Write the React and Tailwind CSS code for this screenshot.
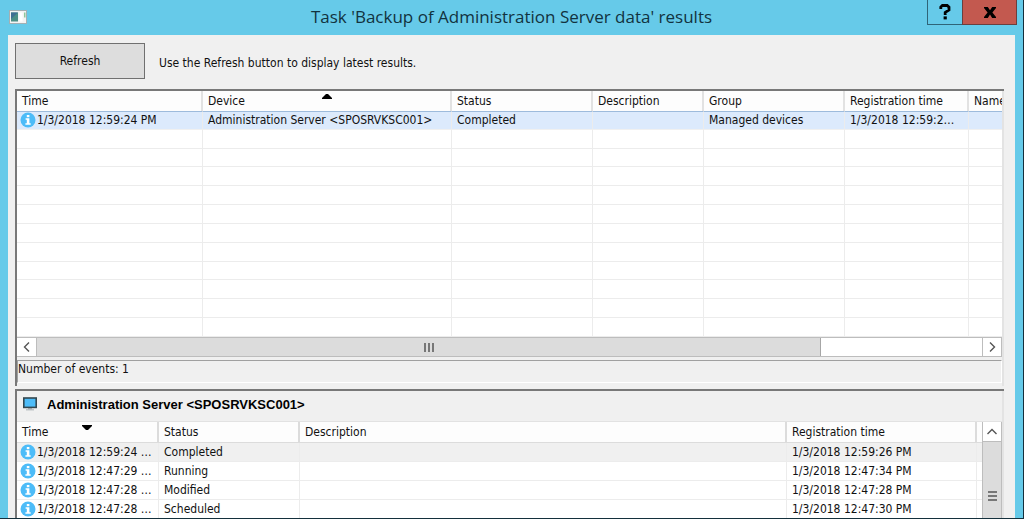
import { useState } from "react";

const events = [
  {
    time: "1/3/2018 12:59:24 PM",
    device: "Administration Server <SPOSRVKSC001>",
    status: "Completed",
    description: "",
    group: "Managed devices",
    registered: "1/3/2018 12:59:26 PM",
  },
];

const history = [
  { time: "1/3/2018 12:59:24 PM", status: "Completed", registered: "1/3/2018 12:59:26 PM" },
  { time: "1/3/2018 12:47:29 PM", status: "Running", registered: "1/3/2018 12:47:34 PM" },
  { time: "1/3/2018 12:47:28 PM", status: "Modified", registered: "1/3/2018 12:47:28 PM" },
  { time: "1/3/2018 12:47:28 PM", status: "Scheduled", registered: "1/3/2018 12:47:30 PM" },
];

const EMPTY_ROWS = 11;

const th = "relative border-r-2 border-[#e2e2e2] p-0 pl-[5px] text-left font-normal whitespace-nowrap overflow-hidden";
const td = "border-r border-[#ececec] p-0 pl-[5px] whitespace-nowrap overflow-hidden";

function InfoIcon() {
  return (
    <svg viewBox="0 0 16 16" className="size-4 shrink-0" aria-hidden="true">
      <circle cx="8" cy="8" r="7.5" fill="#4dbcf8" />
      <rect x="6.8" y="3" width="2.6" height="2.2" fill="#fff" />
      <path d="M5.6 6.3h3.8v4.9h1.3v1.5H5.4v-1.5h1.4V7.8H5.6z" fill="#fff" />
    </svg>
  );
}

function SortArrow({ down }) {
  return (
    <svg viewBox="0 0 10 5" className="absolute top-[3px] left-1/2 h-[5px] w-[10px] -translate-x-1/2" aria-hidden="true">
      <path d={down ? "M0 0h10v1L6 5H4L0 1z" : "M0 5h10V4L6 0H4L0 4z"} fill="#000" />
    </svg>
  );
}

function Chevron({ d }) {
  return (
    <svg viewBox="0 0 10 10" className="size-[10px]" aria-hidden="true">
      <path d={d} fill="none" stroke="#555" strokeWidth="1.4" />
    </svg>
  );
}

function TimeCell({ time }) {
  return (
    <div className="flex items-center gap-px pr-1">
      <InfoIcon />
      <span className="truncate">{time}</span>
    </div>
  );
}

export default function App() {
  const [selected, setSelected] = useState(0);

  return (
    <div className="flex h-screen flex-col overflow-hidden border-r border-b border-[#14303c] bg-[#66cae9] font-['DejaVu_Sans_Condensed','DejaVu_Sans',sans-serif] text-[12px] leading-4 text-[#111]">
      {/* Title bar */}
      <header className="grid h-[35px] shrink-0 grid-cols-[96px_1fr_96px]">
        <div className="pt-[10px] pl-[9px]">
          <svg viewBox="0 0 18 14" className="h-[14px] w-[18px]" aria-hidden="true">
            <rect x="0.5" y="0.5" width="17" height="13" fill="#f4f4f4" stroke="#a3b0b4" />
            <rect x="2" y="2.5" width="7" height="9" fill="#4c8f86" />
            <path d="M2 2.5h7L2 9z" fill="#3f6f93" />
            <rect x="10.5" y="2.5" width="3" height="9" fill="#fff" />
            <rect x="15" y="2.5" width="1.5" height="5" fill="#8fc79b" />
          </svg>
        </div>
        <h1 className="truncate pt-[5px] text-center font-['Open_Sans',sans-serif] text-[17px] leading-6 text-[#12333f]">
          Task 'Backup of Administration Server data' results
        </h1>
        <div className="flex h-[25px] w-[90px]">
          <button aria-label="Help" className="flex w-9 items-center justify-center border border-t-0 border-[#2f6478] text-black">
            <svg viewBox="0 0 12 16" className="h-4 w-3" aria-hidden="true">
              <path d="M1.8 5V3L3.4 1.5h4.8L10 3.2v2.7L6.2 8.4v2.6" fill="none" stroke="#000" strokeWidth="2.8" />
              <rect x="4.6" y="12.4" width="3.2" height="3" fill="#000" />
            </svg>
          </button>
          <button aria-label="Close" className="-ml-px flex flex-1 items-center justify-center border border-t-0 border-[#6b3f3e] bg-[#c3594f]">
            <svg viewBox="0 0 12 11" className="h-[11px] w-3" aria-hidden="true">
              <path d="M0 0h3.8L6 3.3 8.2 0H12v1L8.4 5.5 12 10v1H8.2L6 7.6 3.8 11H0v-1l3.6-4.5L0 1z" fill="#000" />
            </svg>
          </button>
        </div>
      </header>

      <main className="mr-2 ml-2 flex min-h-0 flex-1 flex-col bg-[#f0f0f0] pr-[11px] pl-[7px]">
        <div className="flex items-center gap-[14px] pt-2 pb-[10px]">
          <button className="h-9 w-[130px] border border-[#707070] bg-[#dddddd]">Refresh</button>
          <p className="pt-1">Use the Refresh button to display latest results.</p>
        </div>

        {/* Events list */}
        <section className="shrink-0 border-t-2 border-l-2 border-[#787878]">
          <div className="border-r-2 border-[#e3e3e3] bg-white">
            <table className="h-[246px] w-full table-fixed border-separate border-spacing-0">
              <colgroup>
                <col className="w-[186px]" />
                <col className="w-[249px]" />
                <col className="w-[141px]" />
                <col className="w-[111px]" />
                <col className="w-[141px]" />
                <col className="w-[124px]" />
                <col />
              </colgroup>
              <thead>
                <tr className="h-5 bg-[#fdfdfd]">
                  <th className={th}>Time</th>
                  <th className={th}>
                    Device
                    <SortArrow />
                  </th>
                  <th className={th}>Status</th>
                  <th className={th}>Description</th>
                  <th className={th}>Group</th>
                  <th className={th}>Registration time</th>
                  <th className="overflow-hidden p-0 pl-[5px] text-left font-normal whitespace-nowrap">Name</th>
                </tr>
              </thead>
              <tbody>
                {events.map((e) => (
                  <tr
                    key={e.time}
                    className="h-[18px] bg-[#dceafc] *:border-t *:border-t-[#9dbbdc] *:border-b *:border-b-[#f0f0f0]"
                  >
                    <td className="overflow-hidden border-r border-[#ececec] p-0 pl-[3px] whitespace-nowrap">
                      <TimeCell time={e.time} />
                    </td>
                    <td className={td}>{e.device}</td>
                    <td className={td}>{e.status}</td>
                    <td className={td}>{e.description}</td>
                    <td className={td}>{e.group}</td>
                    <td className={td}>
                      <div className="truncate pr-2">{e.registered}</div>
                    </td>
                    <td></td>
                  </tr>
                ))}
                {Array.from({ length: EMPTY_ROWS }, (_, i) => (
                  <tr key={i} className="h-[18px] *:border-b *:border-[#ececec]">
                    <td className={td}></td>
                    <td className={td}></td>
                    <td className={td}></td>
                    <td className={td}></td>
                    <td className={td}></td>
                    <td className={td}></td>
                    <td></td>
                  </tr>
                ))}
              </tbody>
            </table>

            <div className="flex h-5 border-y border-[#bdbdbd] bg-white">
              <button aria-label="Scroll left" className="flex w-5 items-center justify-center border-r border-[#bdbdbd]">
                <Chevron d="M7 0.5L2.5 5L7 9.5" />
              </button>
              <div className="flex-1">
                <div className="flex h-full w-[83%] items-center justify-center gap-[2px] border-r border-[#a6a6a6] bg-[#dcdcdc]">
                  <span className="h-[9px] w-[2px] bg-[#777]" />
                  <span className="h-[9px] w-[2px] bg-[#777]" />
                  <span className="h-[9px] w-[2px] bg-[#777]" />
                </div>
              </div>
              <button aria-label="Scroll right" className="flex w-5 items-center justify-center border-x border-[#bdbdbd]">
                <Chevron d="M3 0.5L7.5 5L3 9.5" />
              </button>
            </div>

            <div className="bg-[#f0f0f0] pt-[3px] pb-[3px]">
              <div className="h-[23px] border border-[#a0a0a0] border-r-white border-b-white">Number of events: {events.length}</div>
            </div>
          </div>
        </section>

        {/* History of the selected device */}
        <section className="mt-[3px] flex min-h-0 flex-1 flex-col border-t-2 border-l-2 border-[#787878]">
          <div className="flex min-h-0 flex-1 flex-col border-r-2 border-[#e3e3e3]">
            <div className="flex h-[30px] shrink-0 items-center gap-[10px] pb-1 pl-[6px]">
              <svg viewBox="0 0 14 14" className="size-[14px]" aria-hidden="true">
                <rect x="0.8" y="1" width="12.4" height="9.4" fill="#4dbcf8" stroke="#33474f" strokeWidth="1.6" />
                <rect x="5" y="11" width="4" height="1.4" fill="#9aa4a8" />
                <rect x="3" y="12.2" width="8" height="1.2" fill="#b3bbbe" />
              </svg>
              <h2 className="pt-[2px] font-['Liberation_Sans',Arial,sans-serif] text-[13px] font-bold text-black">
                Administration Server &lt;SPOSRVKSC001&gt;
              </h2>
            </div>
            <div className="flex min-h-0 flex-1 overflow-hidden border-t border-[#e2e2e2] bg-white">
              <div className="min-w-0 flex-1">
                <table className="w-full table-fixed border-separate border-spacing-0">
                  <colgroup>
                    <col className="w-[142px]" />
                    <col className="w-[141px]" />
                    <col />
                    <col className="w-[190px]" />
                    <col className="w-[5px]" />
                  </colgroup>
                  <thead>
                    <tr className="h-[21px] bg-[#fdfdfd] *:border-b *:border-[#dcdcdc]">
                      <th className={th}>
                        Time
                        <SortArrow down />
                      </th>
                      <th className={th}>Status</th>
                      <th className={th}>Description</th>
                      <th className={th}>Registration time</th>
                      <th className="p-0"></th>
                    </tr>
                  </thead>
                  <tbody>
                    {history.map((h, i) => (
                      <tr
                        key={i}
                        onClick={() => setSelected(i)}
                        className={`h-[19px] *:border-b *:border-[#ececec] ${selected === i ? "bg-[#f0f0f0]" : ""}`}
                      >
                        <td className="overflow-hidden border-r border-[#ececec] p-0 pl-[3px] whitespace-nowrap">
                          <TimeCell time={h.time} />
                        </td>
                        <td className={td}>{h.status}</td>
                        <td className={td}></td>
                        <td className={td}>{h.registered}</td>
                        <td className="p-0"></td>
                      </tr>
                    ))}
                  </tbody>
                </table>
              </div>
              <div className="flex w-5 shrink-0 flex-col border-x border-[#bdbdbd]">
                <button aria-label="Scroll up" className="flex h-5 shrink-0 items-center justify-center border-b border-[#bdbdbd] bg-white">
                  <Chevron d="M0.5 7L5 2.5L9.5 7" />
                </button>
                <div className="flex flex-1 flex-col items-center justify-end gap-[2px] bg-[#dcdcdc] pb-[17px]">
                  <span className="h-[2px] w-[9px] bg-[#777]" />
                  <span className="h-[2px] w-[9px] bg-[#777]" />
                  <span className="h-[2px] w-[9px] bg-[#777]" />
                </div>
              </div>
            </div>
          </div>
        </section>
      </main>
    </div>
  );
}
